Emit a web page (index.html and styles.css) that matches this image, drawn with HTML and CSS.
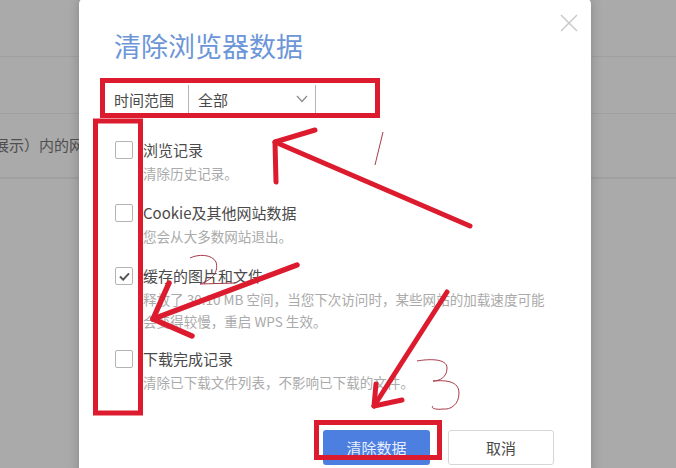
FILE: index.html
```html
<!DOCTYPE html>
<html lang="zh-CN">
<head>
<meta charset="utf-8">
<title>清除浏览器数据</title>
<link rel="stylesheet" href="styles.css">
</head>
<body>
<div class="page">
  <div class="bg-row bg-row-1"></div>
  <div class="bg-row bg-row-2"></div>
  <div class="bg-row bg-row-3"><span class="bg-text">展示）内的网站数据</span></div>
  <div class="bg-row bg-row-4"></div>

  <section class="dialog">
    <button class="close" aria-label="关闭">
      <svg width="18" height="18" viewBox="0 0 18 18"><path d="M1 1 L17 17 M17 1 L1 17" fill="none" stroke="#c9c9c9" stroke-width="1.5"/></svg>
    </button>
    <h1 class="title">清除浏览器数据</h1>
    <div class="range">
      <span class="range-label">时间范围</span>
      <div class="select">
        <span>全部</span>
        <svg width="12" height="8" viewBox="0 0 12 8"><path d="M1 1 L6 6.5 L11 1" fill="none" stroke="#8a8a8a" stroke-width="1.2"/></svg>
      </div>
    </div>
    <div class="options">
      <div class="option option-1">
        <span class="check"></span>
        <div>
          <div class="opt-title">浏览记录</div>
          <div class="opt-desc">清除历史记录。</div>
        </div>
      </div>
      <div class="option option-2">
        <span class="check"></span>
        <div>
          <div class="opt-title">Cookie及其他网站数据</div>
          <div class="opt-desc">您会从大多数网站退出。</div>
        </div>
      </div>
      <div class="option option-3">
        <span class="check">
          <svg width="11" height="9" viewBox="0 0 12 10"><path d="M1 5 L4.5 8.5 L11 1.5" fill="none" stroke="#555" stroke-width="2.2"/></svg>
        </span>
        <div>
          <div class="opt-title">缓存的图片和文件</div>
          <div class="opt-desc">释放了 30.10 MB 空间，当您下次访问时，某些网站的加载速度可能<br>会变得较慢，重启 WPS 生效。</div>
        </div>
      </div>
      <div class="option option-4">
        <span class="check"></span>
        <div>
          <div class="opt-title">下载完成记录</div>
          <div class="opt-desc">清除已下载文件列表，不影响已下载的文件。</div>
        </div>
      </div>
    </div>
    <div class="footer">
      <button class="btn btn-primary">清除数据</button>
      <button class="btn btn-cancel">取消</button>
    </div>
  </section>

  <svg class="marks" width="676" height="468" viewBox="0 0 676 468">
    <g class="box">
      <rect x="102.5" y="80.5" width="275" height="35"/>
      <rect x="95.5" y="121" width="45" height="292"/>
      <rect x="316.5" y="422.5" width="123" height="35"/>
    </g>
    <g class="arrow">
      <path class="w5" d="M470 226 L275 142"/>
      <path class="w5" d="M315 130 L275 142 L276 182"/>
      <path class="w6" d="M297 265 L153 319"/>
      <path class="w6" d="M169 283 L153 319 L192 336"/>
      <path class="w5" d="M447 292 L374 406"/>
      <path class="w5" d="M402 400 L374 406 L376 384"/>
    </g>
    <g class="pen">
      <path d="M383 132 L375 165"/>
      <path d="M190 258 C198 254 212 254 216 262 C219 272 212 280 200 284 L235 283"/>
      <path d="M417 361 C428 359 447 358 447 368 C447 377 440 381 433 381 C446 380 459 381 459 393 C459 405 450 410 443 409 C436 410 430 408 433 406"/>
    </g>
  </svg>
</div>
</body>
</html>
```
FILE: styles.css
```css
* { box-sizing: border-box; }
html, body { margin: 0; padding: 0; }
body { font-family: "Noto Sans CJK SC", "Liberation Sans", sans-serif; }
.page {
  position: relative;
  width: 676px;
  height: 468px;
  overflow: hidden;
  background: #aaaaaa;
}
.bg-row { border-bottom: 1px solid #a0a0a0; display: flex; align-items: center; }
.bg-row-1 { height: 57px; }
.bg-row-2 { height: 57px; }
.bg-row-3 { height: 64px; padding-bottom: 2px; }
.bg-text {
  margin-left: -6px;
  font-size: 15px;
  color: #4f4f4f;
  white-space: nowrap;
}
.dialog {
  position: absolute;
  left: 79px;
  top: -2px;
  width: 512px;
  height: 480px;
  background: #fff;
  border-radius: 6px;
  box-shadow: 0 0 12px rgba(0, 0, 0, 0.22);
  padding: 29px 36px 0;
}
.close {
  position: absolute;
  top: 16px;
  right: 13px;
  width: 18px;
  height: 18px;
  padding: 0;
  border: 0;
  background: none;
  display: flex;
}
.title {
  margin: 0 0 0 -1px;
  height: 38px;
  line-height: 38px;
  font-size: 27px;
  font-weight: 400;
  color: #6c96d8;
  white-space: nowrap;
}
.range {
  display: flex;
  align-items: center;
  height: 28px;
  margin-top: 20px;
  font-size: 15px;
  color: #4a4a4a;
}
.range-label { width: 74px; white-space: nowrap; margin-left: -1px; }
.select {
  width: 128px;
  height: 28px;
  border-left: 1px solid #b5b5b5;
  border-right: 1px solid #b5b5b5;
  padding: 0 7px 0 9px;
  display: flex;
  align-items: center;
  justify-content: space-between;
}
.options { margin-top: 26px; }
.option { display: flex; align-items: flex-start; gap: 10px; }
.option-1 { height: 63px; }
.option-2 { height: 63px; }
.option-3 { height: 83px; }
.check {
  width: 18px;
  height: 18px;
  margin-top: 2px;
  border: 1px solid #b4b4b4;
  border-radius: 2px;
  background: #fff;
  flex: none;
  display: flex;
  align-items: center;
  justify-content: center;
}
.opt-title {
  font-size: 15px;
  line-height: 22px;
  color: #4a4a4a;
  white-space: nowrap;
}
.opt-desc {
  margin-top: 1px;
  font-size: 13.55px;
  line-height: 22px;
  color: #aaa;
  white-space: nowrap;
}
.footer {
  position: absolute;
  right: 37px;
  bottom: 13px;
  display: flex;
  gap: 18px;
}
.btn {
  height: 35px;
  border-radius: 3px;
  font: inherit;
  font-size: 15px;
  padding: 0;
}
.btn-primary {
  width: 107px;
  border: 0;
  background: #4c7fe0;
  color: #e8eefb;
}
.btn-cancel {
  width: 106px;
  border: 1px solid #d6d6d6;
  background: #fff;
  color: #4a4a4a;
}
.marks { position: absolute; left: 0; top: 0; pointer-events: none; }
.box rect { fill: none; stroke: #dc1c2e; stroke-width: 5; }
.arrow path { fill: none; stroke: #dc1c2e; stroke-linecap: round; stroke-linejoin: round; }
.w5 { stroke-width: 5; }
.w6 { stroke-width: 5.5; }
.pen path { fill: none; stroke: #a83a48; stroke-width: 1; }
```
